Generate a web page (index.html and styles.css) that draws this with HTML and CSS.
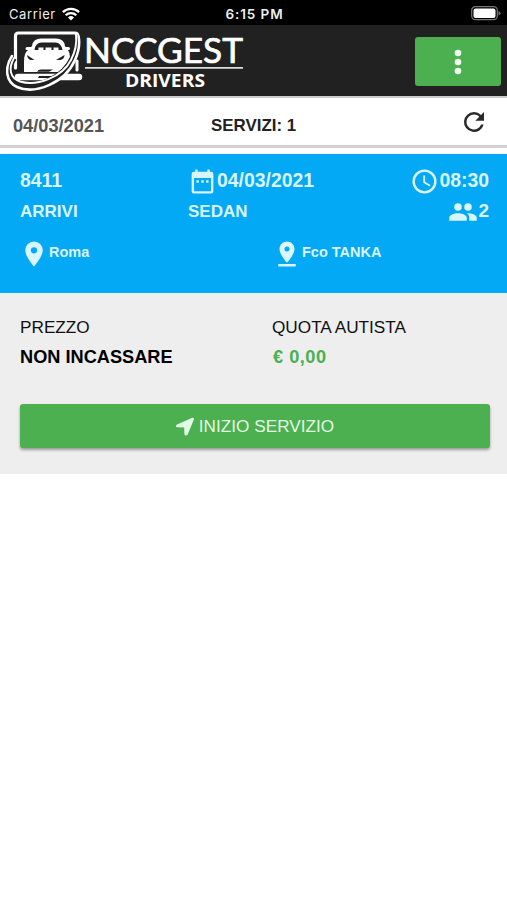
FILE: index.html
```html
<!DOCTYPE html>
<html lang="it">
<head>
<meta charset="utf-8">
<title>NCCGEST Drivers</title>
<link rel="stylesheet" href="styles.css">
</head>
<body>
<div class="status">
  <div class="carrier"><span>Carrier</span>
    <svg width="18" height="14" viewBox="0 0 18 14" fill="none" stroke="#fff" stroke-width="2.3"><path d="M.9 5.1a11.6 11.6 0 0 1 16.2 0M3.7 8.2a7.6 7.6 0 0 1 10.6 0"/><path d="M9 13.6 6 10.5a4.3 4.3 0 0 1 6 0z" fill="#fff" stroke="none"/></svg>
  </div>
  <div class="clock">6:15 PM</div>
  <svg class="battery" width="30" height="15" viewBox="0 0 30 15"><rect x=".7" y=".7" width="25.6" height="13" rx="3.6" fill="none" stroke="#777" stroke-width="1.2"/><rect x="2.5" y="2.5" width="22" height="9.4" rx="2" fill="#fff"/><path d="M27.5 5q2 .8 2 2.2t-2 2.2z" fill="#777"/></svg>
</div>
<header class="header">
  <svg class="emblem" width="78" height="66" viewBox="0 0 78 66" fill="none" stroke="#fff" stroke-linecap="round">
    <path d="M9.500 41V9q0-3 3-3h56q3.500 0 3.500 3.500" stroke-width="3.200"/>
    <path d="M71 34v9" stroke-width="3"/>
    <path d="M12 50h61" stroke-width="6.500"/>
    <path d="M18 45V34q0-8 4-11l4-4q1-7.500 9-7.500h15q8 0 9 7.500l3 4q2 3 2 7-3 7-11 15z" fill="#fff" stroke="none"/>
    <path d="M28.500 23q1-7.500 7-7.500h14q5.500 0 7 7.500h-4v-2.500h-5V23h-2v-2.500h-6V23h-2v-2.500h-5V23z" fill="#212121" stroke="none"/>
    <path d="M21 21.500h4M60 21.500h2.500" stroke-width="3"/>
    <path d="m21 28 7.500 5h-4q-3-1-3.500-5M58.500 28 50 33h4.500q4-1 4-5" fill="#212121" stroke="none"/>
    <path d="M31 44.800q1-2.300 4-2.300h12l-4 2.300zM33 49h15l-4 2H32z" fill="#212121" stroke="none"/>
    <path d="M8 31C0 42 3 53 13 57c18 6 45-6 54-26 4-8 5-15 4-23" stroke="#212121" stroke-width="6" stroke-linecap="butt"/>
    <path d="M6 29C-2 41 0 55 11 60c18 8 48-4 58-27 4-9 5-17 3.500-24" stroke-width="2.600"/>
    <path d="M8 31C2 42 4 51 14 54.500c17 5 42-4 51-21.500 4-8 6-17 5-25" stroke-width="1.900"/>
  </svg>
  <svg class="wordmark" width="166" height="60" viewBox="0 0 166 60" fill="#fff">
    <text class="brand" x="0" y="30.500" textLength="159" lengthAdjust="spacingAndGlyphs">NCCGEST</text>
    <path d="M1 35h158v1.800H1z" fill="#ddd"/>
    <text class="sub" x="41" y="55" textLength="80" lengthAdjust="spacingAndGlyphs">DRIVERS</text>
  </svg>
  <button class="menu" aria-label="Menu"><svg width="8" height="26" viewBox="0 0 8 26" fill="#f0fff0"><circle cx="4" cy="4" r="3.300"/><circle cx="4" cy="13" r="3.300"/><circle cx="4" cy="22" r="3.300"/></svg></button>
</header>
<div class="toolbar">
  <span class="day">04/03/2021</span>
  <span class="count">SERVIZI: 1</span>
  <svg class="refresh" width="30" height="30" viewBox="0 0 24 24" fill="#2a2a2a"><path d="M17.650 6.350A7.960 7.960 0 0 0 12 4a8 8 0 1 0 7.730 10h-2.080A6 6 0 1 1 12 6c1.660 0 3.140.69 4.220 1.780L13 11h7V4z"/></svg>
</div>
<main class="card">
  <section class="trip">
    <div class="line big">
      <span class="c1">8411</span>
      <span class="c2"><svg width="29" height="29" viewBox="0 0 24 24"><path d="M9 11H7v2h2zm4 0h-2v2h2zm4 0h-2v2h2zm2-7h-1V2h-2v2H8V2H6v2H5a2 2 0 0 0-2 2v14c0 1.100.9 2 2 2h14a2 2 0 0 0 2-2V6a2 2 0 0 0-2-2m0 16H5V9h14z"/></svg>04/03/2021</span>
      <span class="c3"><svg width="29" height="29" viewBox="0 0 24 24"><path d="M12 2a10 10 0 1 0 0 20 10 10 0 0 0 0-20m0 18a8 8 0 1 1 0-16 8 8 0 0 1 0 16m.5-13H11v6l5.250 3.150.75-1.230-4.500-2.670z"/></svg>08:30</span>
    </div>
    <div class="line mid">
      <span class="c1">ARRIVI</span>
      <span class="c2">SEDAN</span>
      <span class="c3"><svg width="30" height="30" viewBox="0 0 24 24"><path d="M16 11a3 3 0 1 0 0-6 3 3 0 0 0 0 6m-8 0a3 3 0 1 0 0-6 3 3 0 0 0 0 6m0 2c-2.330 0-7 1.170-7 3.500V19h14v-2.500C15 14.170 10.330 13 8 13m8 0-.97.05c1.160.84 1.970 1.970 1.970 3.450V19h6v-2.500c0-2.330-4.670-3.500-7-3.500"/></svg><b class="pax">2</b></span>
    </div>
    <div class="route">
      <span><svg width="30" height="30" viewBox="0 0 24 24"><path d="M12 2a7 7 0 0 0-7 7c0 5.250 7 13 7 13s7-7.750 7-13a7 7 0 0 0-7-7m0 9.500a2.500 2.500 0 1 1 0-5 2.500 2.500 0 0 1 0 5"/></svg>Roma</span>
      <span><svg width="30" height="30" viewBox="0 0 24 24"><path d="M18 8c0-3.310-2.690-6-6-6S6 4.690 6 8c0 4.500 6 11 6 11s6-6.500 6-11m-8 0a2 2 0 1 1 4 0 2 2 0 0 1-4 0M5 20v2h14v-2z"/></svg>Fco TANKA</span>
    </div>
  </section>
  <section class="details">
    <div class="fares">
      <div><div class="label">PREZZO</div><div class="value">NON INCASSARE</div></div>
      <div><div class="label">QUOTA AUTISTA</div><div class="value euro">€ 0,00</div></div>
    </div>
    <button class="start"><svg width="18" height="19" viewBox="0 0 18 19" fill="#e2fbe4"><path d="M15.800.9 1 7.500C-.6 8.400 0 10.200 1.400 10.300l6.800.3.200 6.400c.2 1.900 2.500 2 3.300.4L17.700 3C18.300 1.300 17.200.3 15.800.9"/></svg><span>INIZIO SERVIZIO</span></button>
  </section>
</main>
</body>
</html>
```
FILE: styles.css
```css
* { box-sizing: border-box; }
body { margin: 0; background: #fff; color: #111; font-family: "Liberation Sans", Arial, sans-serif; }
svg { display: block; flex: none; }
button { border: 0; padding: 0; font: inherit; background: #4caf50; display: flex; align-items: center; justify-content: center; }
.status { height: 25px; background: #000; color: #eee; display: grid; grid-template-columns: 1fr auto 1fr; align-items: center; padding: 2px 6px 0 9px; font-family: Inter, sans-serif; font-size: 13px; }
.carrier { display: flex; align-items: center; gap: 6px; letter-spacing: .6px; }
.clock { font-weight: 600; font-size: 13.5px; letter-spacing: .9px; margin-right: 1px; }
.battery { justify-self: end; margin-top: -1px; }
.header { height: 71px; background: #212121; display: flex; align-items: flex-start; padding-left: 6px; }
.emblem { margin-top: 2px; }
.wordmark { margin: 7px 0 0 0; overflow: visible; }
.brand { font: 400 35px/1 Lato, sans-serif; stroke: #fff; stroke-width: .7px; }
.sub { font: 700 18.5px/1 "Open Sans", sans-serif; }
.menu { width: 86px; height: 49px; margin: 12px 6px 0 auto; border-radius: 3px; }
.toolbar { height: 52px; border-top: 2px solid #ccc; border-bottom: 3px solid #d2d2d2; display: flex; align-items: center; padding: 9px 18px 0 13px; font-weight: 700; }
.day { width: 198px; font-size: 18.2px; color: #555; }
.count { font-size: 16.900px; color: #222; }
.refresh { margin: -9px 0 0 auto; }
.card { margin-top: 6px; box-shadow: 0 3px 5px rgba(0,0,0,.22); }
.trip { height: 139px; background: #03a9f4; color: #d9f5ff; font-weight: 700; padding: 10px 18px 0 20px; }
.trip svg { fill: #d9f5ff; }
.line { display: grid; grid-template-columns: 168px 1fr auto; align-items: center; height: 31px; }
.line span { display: flex; align-items: center; }
.big { font-size: 19.400px; line-height: 28px; }
.big .c1, .big .c2, .big .c3 { height: 28px; }
.big svg { margin-top: 4px; }
.mid { font-size: 17px; margin-top: 1px; }
.mid svg { margin-top: 1px; }
.pax { font-size: 19px; margin-top: -2px; }
.route { display: grid; grid-template-columns: 253px 1fr; margin-top: 11px; font-size: 14.500px; line-height: 28px; }
.route span { display: flex; align-items: flex-start; margin-left: -1px; }
.route svg { margin-top: 1px; }
.details { height: 181px; background: #eee; padding: 23px 17px 0 20px; }
.fares { display: grid; grid-template-columns: 252px 1fr; color: #111; }
.label { font-size: 17.200px; line-height: 23px; }
.value { font-size: 18.200px; line-height: 23px; margin-top: 7px; font-weight: 700; color: #000; }
.euro { color: #4caf50; letter-spacing: .5px; padding-left: 1px; }
.start { width: 100%; height: 44px; margin-top: 35px; border-radius: 3px; color: #e2fbe4; font-size: 17.200px; gap: 5px; box-shadow: 0 2px 3px rgba(0,0,0,.35); }
```
